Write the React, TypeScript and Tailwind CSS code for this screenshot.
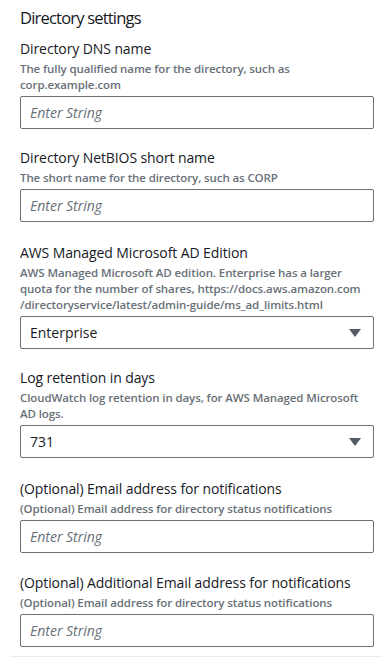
import React from "react";

const font = { fontFamily: '"Open Sans", "Noto Sans", sans-serif' };

function Label({ children }: { children: React.ReactNode }) {
  return <div className="text-[14px] leading-5 text-[#16191f] tracking-[-0.1px]">{children}</div>;
}

function Desc({ children }: { children: React.ReactNode }) {
  return (
    <div className="mt-[2px] text-[11.5px] leading-4 font-semibold text-[#687078] tracking-[-0.1px]">
      {children}
    </div>
  );
}

function TextInput() {
  return (
    <div className="mt-[3px] h-[33px] border border-[#687078] rounded-[2px] flex items-center px-[9px]">
      <span className="italic text-[14px] text-[#687078]">Enter String</span>
    </div>
  );
}

function Select({ value }: { value: string }) {
  return (
    <div className="mt-[3px] h-[33px] border border-[#687078] rounded-[2px] flex items-center justify-between pl-[9px] pr-[12px]">
      <span className="text-[14px] text-[#16191f]">{value}</span>
      <svg width="12" height="8" viewBox="0 0 12 8">
        <polygon points="0,0 12,0 6,8" fill="#545b64" />
      </svg>
    </div>
  );
}

export default function App() {
  return (
    <div className="w-[392px] h-[667px] bg-white overflow-hidden" style={font}>
      <div className="pl-[20px] pr-[18px] pt-[6px]">
        <h2 className="text-[16.5px] leading-6 text-[#16191f] tracking-[-0.8px]">Directory settings</h2>
        <div className="mt-[9px]">
          <Label>Directory DNS name</Label>
          <Desc>
            The fully qualified name for the directory, such as
            <br />
            corp.example.com
          </Desc>
          <TextInput />
        </div>
        <div className="mt-[19px]">
          <Label>Directory NetBIOS short name</Label>
          <Desc>The short name for the directory, such as CORP</Desc>
          <TextInput />
        </div>
        <div className="mt-[21px]">
          <Label>AWS Managed Microsoft AD Edition</Label>
          <Desc>
            AWS Managed Microsoft AD edition. Enterprise has a larger
            <br />
            quota for the number of shares, https://docs.aws.amazon.com
            <br />
            /directoryservice/latest/admin-guide/ms_ad_limits.html
          </Desc>
          <Select value="Enterprise" />
        </div>
        <div className="mt-[19px]">
          <Label>Log retention in days</Label>
          <Desc>
            CloudWatch log retention in days, for AWS Managed Microsoft
            <br />
            AD logs.
          </Desc>
          <Select value="731" />
        </div>
        <div className="mt-[21px]">
          <Label>(Optional) Email address for notifications</Label>
          <Desc>(Optional) Email address for directory status notifications</Desc>
          <TextInput />
        </div>
        <div className="mt-[20px]">
          <Label>(Optional) Additional Email address for notifications</Label>
          <Desc>(Optional) Email address for directory status notifications</Desc>
          <TextInput />
        </div>
      </div>
      <div className="mx-[10px] mt-[9px] h-px bg-[#eaeded]" />
    </div>
  );
}
